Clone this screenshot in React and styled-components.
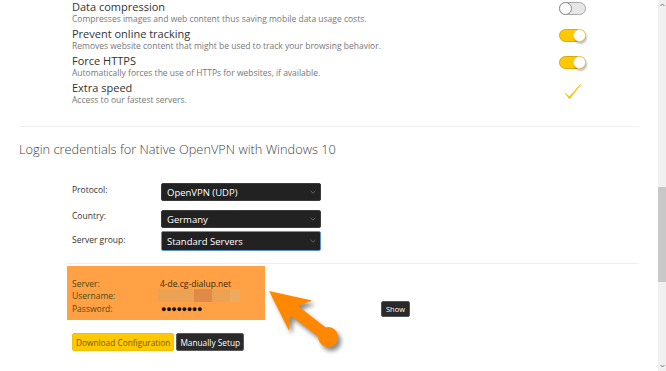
import React from "react";
import styled, { createGlobalStyle } from "styled-components";

const Global = createGlobalStyle`
  html, body { margin: 0; padding: 0; height: 371px; overflow: hidden; background: #fff; }
  body { font-family: "Open Sans", "Liberation Sans", sans-serif; }
  * { box-sizing: border-box; }
`;

const Page = styled.div`
  display: flex;
  width: 666px;
  height: 371px;
`;

const Main = styled.div`
  position: relative;
  flex: 1;
  padding: 0 19px;
`;

const Scrollbar = styled.div`
  width: 8px;
  background: #f0f0f0;
  display: flex;
  flex-direction: column;
  align-items: center;
`;

const ScrollArrow = styled.div`
  height: 10px;
  display: flex;
  align-items: center;
  justify-content: center;
  color: #777;
`;

const ScrollTrack = styled.div`
  flex: 1;
  width: 100%;
  padding-top: 177px;
`;

const Thumb = styled.div`
  width: 100%;
  height: 95px;
  background: #c8c8c8;
`;

const FeatureList = styled.div`
  padding: 0 53px 0;
  display: flex;
  flex-direction: column;
`;

const FeatureRow = styled.div`
  display: grid;
  grid-template-columns: 1fr 27px;
  align-items: start;
  height: 27px;
`;

const FeatureText = styled.div`
  display: flex;
  flex-direction: column;
`;

const FeatureTitle = styled.div`
  font-size: 11px;
  line-height: 13px;
  color: #333;
`;

const FeatureDesc = styled.div`
  font-size: 8.5px;
  line-height: 11px;
  color: #777;
`;

const ControlCell = styled.div`
  display: flex;
  justify-content: center;
  padding-top: ${(p) => p.$top || 2}px;
`;

const Toggle = styled.div`
  position: relative;
  width: 27px;
  height: 13px;
  border-radius: 7px;
  background: ${(p) => (p.$on ? "#ffc800" : "#e6e6e6")};
  border: 1px solid ${(p) => (p.$on ? "#d9aa00" : "#a8a8a8")};
`;

const Knob = styled.div`
  position: absolute;
  top: -1px;
  left: ${(p) => (p.$on ? "13px" : "-1px")};
  width: 13px;
  height: 13px;
  border-radius: 50%;
  background: #fff;
  border: 1px solid ${(p) => (p.$on ? "#e8d080" : "#8c8c8c")};
  box-shadow: ${(p) => (p.$on ? "1px 2px 2px rgba(0,0,0,0.25)" : "none")};
`;

const Divider = styled.div`
  height: 1px;
  background: #eeeeee;
  margin: ${(p) => p.$m || "0"};
`;

const Heading = styled.h2`
  margin: 0;
  font-weight: 300;
  font-size: 12.8px;
  line-height: 17px;
  color: #444;
  padding-top: 14px;
`;

const Form = styled.div`
  display: grid;
  grid-template-columns: 89px 160px;
  row-gap: 3px;
  padding: 25px 0 0 53px;
  align-items: start;
`;

const FieldLabel = styled.div`
  font-size: 8.5px;
  color: #333;
  line-height: 12px;
  padding-top: ${(p) => p.$pt || 0}px;
`;

const SelectBox = styled.div`
  display: flex;
  align-items: center;
  justify-content: space-between;
  height: ${(p) => (p.$focus ? 20 : 18)}px;
  margin-top: ${(p) => p.$mt || 0}px;
  padding: 0 4px 0 5px;
  background: #222;
  border: 1px solid ${(p) => (p.$focus ? "#5b8fd6" : "#3a3a3a")};
  border-radius: 2px;
  color: #fff;
  font-size: 9.5px;
`;

const Chevron = () => (
  <svg width="6" height="4" viewBox="0 0 6 4">
    <path d="M0.5 0.8 L3 3.2 L5.5 0.8" fill="none" stroke="#777" strokeWidth="0.8" />
  </svg>
);

const CredArea = styled.div`
  padding-left: 48px;
`;

const CredRow = styled.div`
  display: flex;
  align-items: flex-start;
  padding-top: 1px;
`;

const OrangeBox = styled.div`
  width: 198px;
  height: 54px;
  background: #ffa144;
  padding: 11px 0 0 5px;
  display: grid;
  grid-template-columns: 88px 1fr;
  grid-auto-rows: 12.5px;
  align-items: center;
`;

const CredLabel = styled.div`
  font-size: 8.5px;
  color: #4f4a14;
`;

const CredValue = styled.div`
  font-size: 8.5px;
  color: #3a2a10;
  display: flex;
  align-items: center;
`;

const Blur = styled.div`
  display: flex;
  height: 13px;
  margin-left: -2px;
`;

const BlurPart = styled.div`
  width: ${(p) => p.$w}px;
  background: ${(p) => p.$c};
`;

const Dots = styled.div`
  font-size: 9px;
  letter-spacing: -0.3px;
  color: #111;
  margin-left: 1px;
`;

const ShowButton = styled.div`
  margin: 35px 0 0 116px;
  height: 16px;
  padding: 0 4px;
  background: #2a2a2a;
  border: 1px solid #555;
  border-radius: 2px;
  color: #fff;
  font-size: 7.5px;
  display: flex;
  align-items: center;
`;

const ButtonRow = styled.div`
  display: flex;
  gap: 2px;
  padding: 13px 0 0 5px;
`;

const Button = styled.div`
  height: 18px;
  padding: 0 3px;
  display: flex;
  align-items: center;
  font-size: 8.3px;
  border-radius: 2px;
  background: ${(p) => (p.$dark ? "#2a2a2a" : "#ffc800")};
  color: ${(p) => (p.$dark ? "#fff" : "#6e5a00")};
  border: 1px solid ${(p) => (p.$dark ? "#5a5a5a" : "#f2c000")};
`;

const ArrowSvg = styled.svg`
  position: absolute;
  left: 250px;
  top: 275px;
  overflow: visible;
  filter: drop-shadow(3px 4px 2px rgba(0, 0, 0, 0.45));
`;

const features = [
  { t: "Data compression", d: "Compresses images and web content thus saving mobile data usage costs.", c: "off" },
  { t: "Prevent online tracking", d: "Removes website content that might be used to track your browsing behavior.", c: "on" },
  { t: "Force HTTPS", d: "Automatically forces the use of HTTPs for websites, if available.", c: "on" },
  { t: "Extra speed", d: "Access to our fastest servers.", c: "check" },
];

export default function App() {
  return (
    <>
      <Global />
      <Page>
        <Main>
          <FeatureList>
            {features.map((f) => (
              <FeatureRow key={f.t}>
                <FeatureText>
                  <FeatureTitle>{f.t}</FeatureTitle>
                  <FeatureDesc>{f.d}</FeatureDesc>
                </FeatureText>
                <ControlCell $top={f.c === "check" ? 3 : 2}>
                  {f.c === "check" ? (
                    <svg width="16" height="16" viewBox="0 0 16 16">
                      <path d="M0.5 9.5 L4.5 14.8 L15.5 0.5 L4.3 13 Z" fill="#ffc400" stroke="#ffc400" strokeWidth="1" strokeLinejoin="round" />
                    </svg>
                  ) : (
                    <Toggle $on={f.c === "on"}>
                      <Knob $on={f.c === "on"} />
                    </Toggle>
                  )}
                </ControlCell>
              </FeatureRow>
            ))}
          </FeatureList>
          <Divider $m="18px 0 0" />
          <Heading>Login credentials for Native OpenVPN with Windows 10</Heading>
          <Form>
            <FieldLabel $pt={1}>Protocol:</FieldLabel>
            <SelectBox>OpenVPN (UDP)<Chevron /></SelectBox>
            <FieldLabel $pt={6}>Country:</FieldLabel>
            <SelectBox $mt={6}>Germany<Chevron /></SelectBox>
            <FieldLabel $pt={3}>Server group:</FieldLabel>
            <SelectBox $focus>Standard Servers<Chevron /></SelectBox>
          </Form>
          <CredArea>
            <Divider $m="12px 0 1px" />
            <CredRow>
              <OrangeBox>
                <CredLabel>Server:</CredLabel>
                <CredValue>4-de.cg-dialup.net</CredValue>
                <CredLabel>Username:</CredLabel>
                <CredValue>
                  <Blur>
                    <BlurPart $w={36} $c="#eba252" />
                    <BlurPart $w={18} $c="#df8a48" />
                    <BlurPart $w={18} $c="#eba252" />
                    <BlurPart $w={10} $c="#eeaa60" />
                  </Blur>
                </CredValue>
                <CredLabel>Password:</CredLabel>
                <CredValue>
                  <Dots>●●●●●●●●</Dots>
                </CredValue>
              </OrangeBox>
              <ShowButton>Show</ShowButton>
            </CredRow>
            <ButtonRow>
              <Button>Download Configuration</Button>
              <Button $dark>Manually Setup</Button>
            </ButtonRow>
          </CredArea>
          <ArrowSvg width="100" height="80" viewBox="0 0 100 80">
            <g transform="translate(19 16) rotate(37.9)" fill="#ff8800">
              <polygon points="0,0 40,-19 32,-6 75,-6 75,6 32,6 40,19" />
              <circle cx="75" cy="0" r="10" />
            </g>
          </ArrowSvg>
        </Main>
        <Scrollbar>
          <ScrollArrow>
            <svg width="5" height="4" viewBox="0 0 5 4"><path d="M0.5 3 L2.5 1 L4.5 3" fill="none" stroke="#777" strokeWidth="1" /></svg>
          </ScrollArrow>
          <ScrollTrack>
            <Thumb />
          </ScrollTrack>
          <ScrollArrow>
            <svg width="5" height="4" viewBox="0 0 5 4"><path d="M0.5 1 L2.5 3 L4.5 1" fill="none" stroke="#777" strokeWidth="1" /></svg>
          </ScrollArrow>
        </Scrollbar>
      </Page>
    </>
  );
}
